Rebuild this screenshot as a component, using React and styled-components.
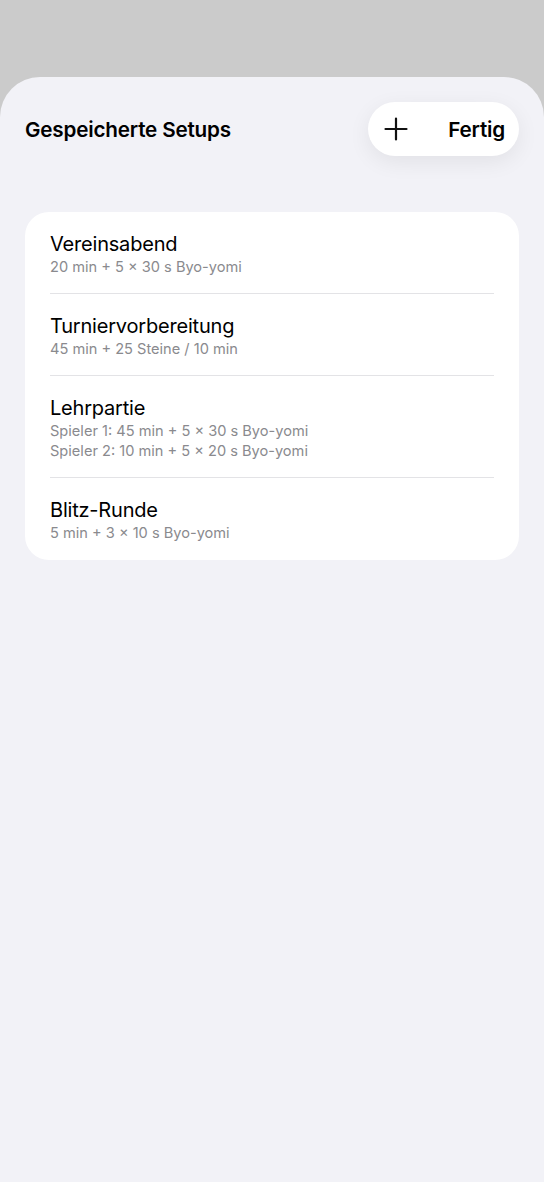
import React from "react";
import styled, { createGlobalStyle } from "styled-components";

const GlobalStyle = createGlobalStyle`
  html, body {
    margin: 0;
    padding: 0;
    background: #cbcbcb;
    font-family: Inter, "Noto Sans", sans-serif;
    -webkit-font-smoothing: antialiased;
  }
`;

const setups = [
  { id: 1, name: "Vereinsabend", lines: ["20 min + 5 × 30 s Byo-yomi"] },
  { id: 2, name: "Turniervorbereitung", lines: ["45 min + 25 Steine / 10 min"] },
  {
    id: 3,
    name: "Lehrpartie",
    lines: ["Spieler 1: 45 min + 5 × 30 s Byo-yomi", "Spieler 2: 10 min + 5 × 20 s Byo-yomi"],
  },
  { id: 4, name: "Blitz-Runde", lines: ["5 min + 3 × 10 s Byo-yomi"] },
];

function PlusIcon() {
  return (
    <svg width="24" height="24" viewBox="0 0 24 24">
      <path d="M12 1.5v21M1.5 12h21" stroke="#111" strokeWidth="2.2" strokeLinecap="round" fill="none" />
    </svg>
  );
}

export default function App() {
  return (
    <>
      <GlobalStyle />
      <Page>
        <Sheet>
          <Header>
            <Title>Gespeicherte Setups</Title>
            <Actions>
              <IconButton aria-label="Neues Setup">
                <PlusIcon />
              </IconButton>
              <TextButton>Fertig</TextButton>
            </Actions>
          </Header>
          <Card>
            {setups.map((s) => (
              <Row key={s.id}>
                <RowTitle>{s.name}</RowTitle>
                {s.lines.map((l) => (
                  <RowDetail key={l}>{l}</RowDetail>
                ))}
              </Row>
            ))}
          </Card>
        </Sheet>
      </Page>
    </>
  );
}

const Page = styled.div`
  min-height: 1182px;
  padding-top: 77px;
  box-sizing: border-box;
  display: flex;
  flex-direction: column;
`;

const Sheet = styled.div`
  flex: 1;
  background: #f2f2f7;
  border-radius: 40px 40px 0 0;
  padding: 25px 25px 0;
  display: flex;
  flex-direction: column;
`;

const Header = styled.div`
  display: flex;
  align-items: center;
  justify-content: space-between;
  height: 54px;
`;

const Title = styled.h1`
  margin: 0;
  font-size: 20.7px;
  font-weight: 600;
  color: #000;
  letter-spacing: -0.2px;
`;

const Actions = styled.div`
  display: flex;
  align-items: center;
  height: 54px;
  width: 151px;
  box-sizing: border-box;
  padding: 0 14px 0 16px;
  justify-content: space-between;
  background: #fff;
  border-radius: 27px;
  box-shadow: 0 6px 22px rgba(0, 0, 0, 0.07);
`;

const IconButton = styled.button`
  border: none;
  background: none;
  padding: 0;
  display: flex;
  align-items: center;
`;

const TextButton = styled.button`
  border: none;
  background: none;
  padding: 0;
  font-family: inherit;
  font-size: 20.7px;
  font-weight: 600;
  color: #000;
  letter-spacing: -0.2px;
`;

const Card = styled.div`
  margin-top: 56px;
  background: #fff;
  border-radius: 24px;
`;

const Row = styled.div`
  margin: 0 25px;
  padding: 20px 0 16px;
  border-bottom: 1px solid #e3e3e6;
  &:last-child {
    border-bottom: none;
    padding-bottom: 17px;
  }
`;

const RowTitle = styled.div`
  font-size: 20px;
  line-height: 25px;
  color: #000;
  letter-spacing: -0.2px;
`;

const RowDetail = styled.div`
  font-size: 14.6px;
  line-height: 20px;
  color: #8a8a8e;
`;
